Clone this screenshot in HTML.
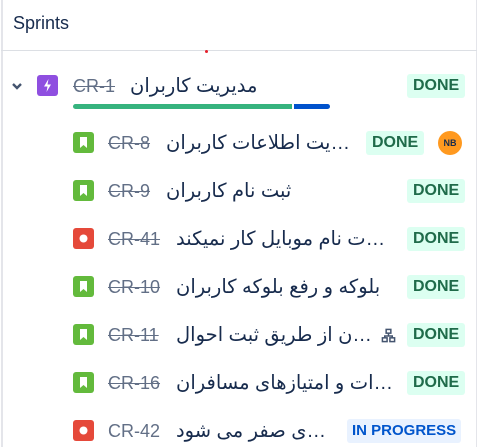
<!DOCTYPE html><html><head><meta charset="utf-8"><style>
body{margin:0;width:478px;height:447px;background:#fff;overflow:hidden;position:relative;font-family:"Liberation Sans","Noto Sans CJK SC",sans-serif;}
.bl{position:absolute;left:1px;top:0;width:2px;height:447px;background:#e4e5ea}
.br{position:absolute;left:476px;top:0;width:1px;height:447px;background:#e4e5ea}
.hd{position:absolute;left:13px;top:13px;font-size:18px;color:#172b4d}
.hr{position:absolute;left:1px;top:50px;width:476px;height:1px;background:#dcdfe4}
.row{position:absolute;left:0;width:478px;height:24px}
.ic{position:absolute;left:73px;top:1px;width:21px;height:21px;border-radius:3px}
.st{background:#63ba3c}.bg{background:#e5493a}
.key{position:absolute;left:108px;top:2px;font-size:18px;color:#626f86;text-decoration:line-through}
.t{position:absolute;top:0px;font-size:19.5px;color:#172b4d;direction:rtl;white-space:nowrap;font-family:"Liberation Sans","Noto Sans CJK SC","DejaVu Sans",sans-serif}
.b{position:absolute;top:0;height:24px;line-height:24px;font-size:16px;font-weight:bold;padding:0 6px;border-radius:3px;background:#dcfff1;color:#1f6b4a;white-space:nowrap}
</style></head><body>
<div class="bl"></div><div class="br"></div>
<div class="hd">Sprints</div><div class="hr"></div>
<div style="position:absolute;left:205px;top:50px;width:3px;height:3px;border-radius:2px;background:#e5202b"></div>

<div class="row" style="top:74px">
<svg style="position:absolute;left:11px;top:7px" width="12" height="10" viewBox="0 0 12 10"><path d="M2 3l4 4 4-4" stroke="#44546f" stroke-width="2.4" fill="none"/></svg>
<div class="ic" style="left:37px;background:#8f4fe0"><svg width="21" height="21" viewBox="0 0 21 21"><path d="M11.5 4L7 11.5h3.5L9.5 17l4.5-7.5h-3.5z" fill="#fff"/></svg></div>
<span class="key" style="left:73px">CR-1</span>
<span class="t" style="left:130px">مدیریت کاربران</span>
<span class="b" style="left:407px">DONE</span>
</div>
<div style="position:absolute;left:73px;top:104px;width:219px;height:5px;border-radius:3px 0 0 3px;background:#36b37e"></div>
<div style="position:absolute;left:294px;top:104px;width:36px;height:5px;border-radius:0 3px 3px 0;background:#0052cc"></div>

<div class="row" style="top:131px"><div class="ic st"><svg width="21" height="21"><path d="M7 5h7v11l-3.5-3-3.5 3z" fill="#fff"/></svg></div><span class="key">CR-8</span><span class="t" style="left:166px">…یت اطلاعات کاربران</span><span class="b" style="left:366px">DONE</span>
<div style="position:absolute;left:438px;top:0;width:24px;height:24px;border-radius:12px;background:#ff991f;font-size:9px;font-weight:bold;color:#172b4d;text-align:center;line-height:24px">NB</div></div>

<div class="row" style="top:179px"><div class="ic st"><svg width="21" height="21"><path d="M7 5h7v11l-3.5-3-3.5 3z" fill="#fff"/></svg></div><span class="key">CR-9</span><span class="t" style="left:166px">ثبت نام کاربران</span><span class="b" style="left:407px">DONE</span></div>

<div class="row" style="top:227px"><div class="ic bg"><svg width="21" height="21"><circle cx="10.5" cy="10.5" r="4" fill="#fff"/></svg></div><span class="key">CR-41</span><span class="t" style="left:176px">…ت نام موبایل کار نمیکند</span><span class="b" style="left:407px">DONE</span></div>

<div class="row" style="top:275px"><div class="ic st"><svg width="21" height="21"><path d="M7 5h7v11l-3.5-3-3.5 3z" fill="#fff"/></svg></div><span class="key">CR-10</span><span class="t" style="left:176px">بلوکه و رفع بلوکه کاربران</span><span class="b" style="left:407px">DONE</span></div>

<div class="row" style="top:323px"><div class="ic st"><svg width="21" height="21"><path d="M7 5h7v11l-3.5-3-3.5 3z" fill="#fff"/></svg></div><span class="key">CR-11</span><span class="t" style="left:176px">…ن از طریق ثبت احوال</span>
<svg style="position:absolute;left:381px;top:5px" width="15" height="15" viewBox="0 0 16 16" fill="none" stroke="#44546f" stroke-width="1.6"><rect x="5.5" y="1.5" width="5" height="4"/><rect x="1.5" y="10.5" width="5" height="4"/><rect x="9.5" y="10.5" width="5" height="4"/><path d="M8 5.5v3M4 10.5v-2h8v2"/></svg>
<span class="b" style="left:407px">DONE</span></div>

<div class="row" style="top:371px"><div class="ic st"><svg width="21" height="21"><path d="M7 5h7v11l-3.5-3-3.5 3z" fill="#fff"/></svg></div><span class="key">CR-16</span><span class="t" style="left:176px">…ات و امتیازهای مسافران</span><span class="b" style="left:407px">DONE</span></div>

<div class="row" style="top:419px"><div class="ic bg"><svg width="21" height="21"><circle cx="10.5" cy="10.5" r="4" fill="#fff"/></svg></div><span class="key" style="text-decoration:none">CR-42</span><span class="t" style="left:176px">…ی صفر می شود</span><span class="b" style="left:347px;padding:0 5px;font-size:15px;background:#e9f2ff;color:#0055cc">IN PROGRESS</span></div>
</body></html>
